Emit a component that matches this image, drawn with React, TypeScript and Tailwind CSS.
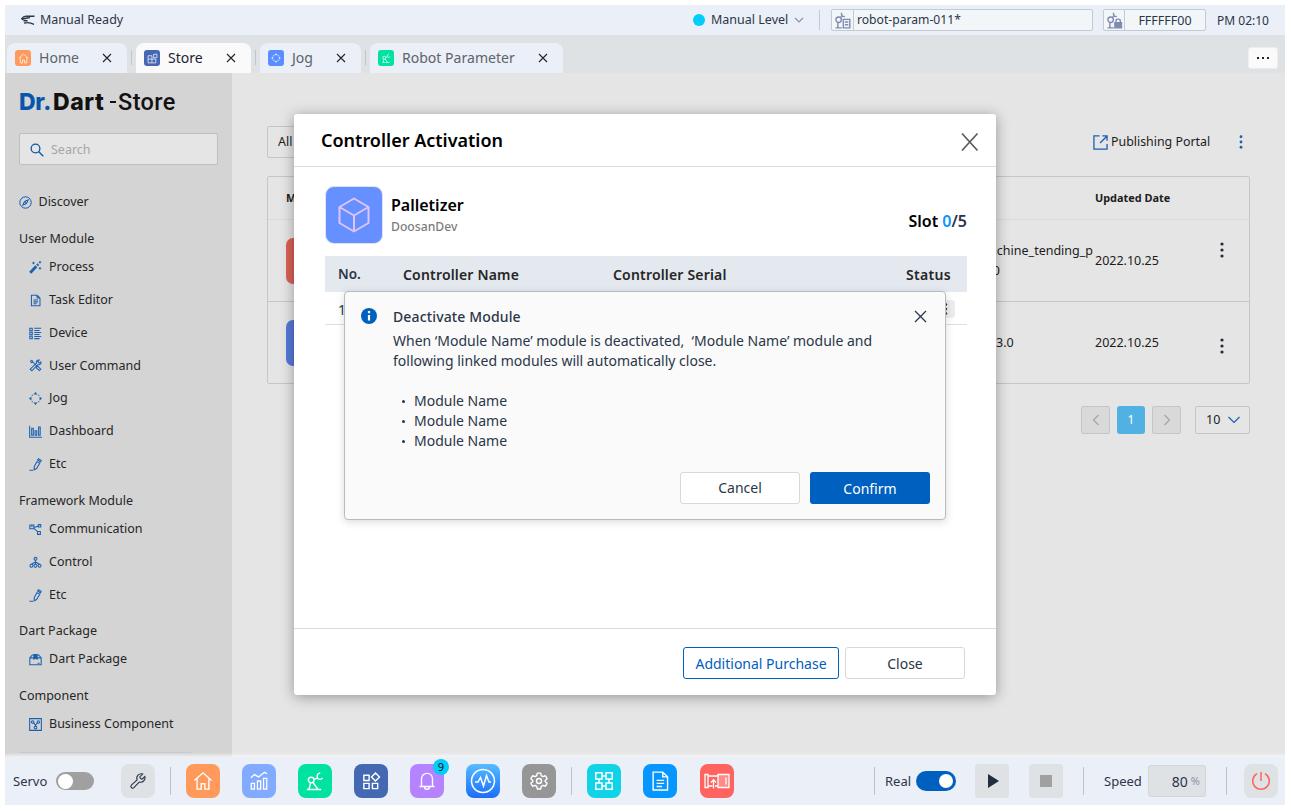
import React from "react";

type IconProps = { size?: number; className?: string; children?: React.ReactNode; box?: number; sw?: number };

function Ic({ size = 14, box = 16, sw = 1.2, className = "", children }: IconProps) {
  return (
    <svg width={size} height={size} viewBox={`0 0 ${box} ${box}`} fill="none" stroke="currentColor" strokeWidth={sw} className={`shrink-0 ${className}`}>
      {children}
    </svg>
  );
}

const robot = (
  <>
    <circle cx="6.500" cy="9.500" r="3" />
    <path d="M9.300 8.700 13 7.500M5.800 12.400 4.300 19M8.300 12 13.500 19M2 19.500h15M16 2c-2.700.5-3.700 2-3 5 1 2.500 3.700 2.200 5.500.3" />
  </>
);
const store = (
  <>
    <path d="M3 4.500h5.500V10H3zM3 13h5.500v5.500H3zM12 13h5.500v5.500H12zM15.200 2.200 19.400 6.400 15.200 10.600 11 6.400z" />
  </>
);
const home = <path d="M1.500 10.500 11 2l9.500 8.500M4.500 8.500V20H9v-6h4v6h4.500V8.500" />;
const doc = (
  <>
    <path d="M3 1.500h7l3.500 3.500v9.500H3zM10 1.500V5h3.500M5.500 7.500h5.500M5.500 9.700h5.500M5.500 12h4" />
  </>
);
const etc = <path d="M.5 15h4.500M6.500 10.500 9.700 4.500l3.600 2-4 6.500-3 1.500zM10.500 2.500l3.700 2.200 1-1.700-3.700-2z" />;
const jog = <path d="M8 .8 6 3h4zM8 15.200 6 13h4zM.8 8 3 6v4zM15.200 8 13 6v4zM3.500 4.500l1-1 .7.7-1 1zM11.500 3.500l1 1-.7.7-1-1zM3.500 11.500l1 1 .7-.7-1-1zM12.500 11.500l-1 1-.7-.7 1-1z" fill="currentColor" />;
const X = ({ size, sw = 1.1, className = "" }: { size: number; sw?: number; className?: string }) => (
  <Ic size={size} box={size} sw={sw} className={className}>
    <path d={`M1 1 ${size - 1} ${size - 1}M${size - 1} 1 1 ${size - 1}`} />
  </Ic>
);

function Dots({ className }: { className: string }) {
  return (
    <svg width="4" height="16" viewBox="0 0 4 16" fill="currentColor" className={`shrink-0 ${className}`}>
      <circle cx="2" cy="2" r="1.600" />
      <circle cx="2" cy="8" r="1.600" />
      <circle cx="2" cy="14" r="1.600" />
    </svg>
  );
}

function TopBar() {
  return (
    <div className="flex h-[30px] items-center bg-[#ebeff7] text-[12.500px] text-[#2b3648]">
      <svg width="14" height="11" viewBox="0 0 14 11" fill="none" stroke="currentColor" strokeWidth="1.400" className="ml-4 shrink-0">
        <path d="M.3 4.200C2 1.500 4 .9 6 1.200h7.500M.8 4.800C3 3 6 3.300 9 2.600M2.500 5.800h4M3 8.200c3-1 6-.9 10 1.200" />
      </svg>
      <span className="ml-[5px] w-[653px] pt-px">Manual Ready</span>
      <span className="size-3 shrink-0 rounded-full bg-[#00cdf9]" />
      <span className="ml-[6px] w-[77px] pt-px whitespace-nowrap">Manual Level</span>
      <Ic size={10} box={10} className="ml-[6px] text-[#8791ad]"><path d="M1 3l4 4 4-4" /></Ic>
      <span className="ml-[15px] h-5 w-px shrink-0 bg-[#c3cad3]" />
      <div className="ml-[11px] flex h-[22px] w-[262px] shrink-0 items-center rounded-[2px] border border-[#c3cad3] bg-[#f2f6f9]">
        <span className="flex h-full w-[22px] items-center justify-center border-r border-[#c3cad3] text-[#7f8bae]">
          <Ic size={17} box={22} sw={1.800}>
            <circle cx="6" cy="10" r="3.500" /><path d="M8 7l3-1.500M10 1c-1 2 0 5 4 5M5 13.500V20M2 20.500h8M12 9.500h8.500v11H12zM14 13h4.500M14 16.500h4.500" />
          </Ic>
        </span>
        <span className="ml-[3px] text-[12.150px]">robot-param-011*</span>
      </div>
      <div className="ml-[10px] flex h-[22px] w-[103px] shrink-0 items-center rounded-[2px] border border-[#c3cad3] bg-[#f2f6f9]">
        <span className="flex h-full w-[21px] items-center justify-center border-r border-[#c3cad3] text-[#7f8bae]">
          <Ic size={17} box={22} sw={1.800}>
            <circle cx="6" cy="10" r="3.500" /><path d="M8 7l3-1.500M10 1c-1 2 0 5 4 5M5 13.500V20M2 20.500h8" /><path d="M13 14v-2.500c0-3 5.500-3 5.500 0V14" /><path d="M11.500 14H20v6.500h-8.500z" fill="currentColor" />
          </Ic>
        </span>
        <span className="flex-1 pt-px text-center text-[12.500px] leading-5">FFFFFF00</span>
      </div>
      <span className="ml-[11px] pt-px text-[12px] whitespace-nowrap">PM 02:10</span>
    </div>
  );
}

function Tab({ cls, tile, label, icon, active }: { cls: string; tile: string; label: string; icon: React.ReactNode; active?: boolean }) {
  return (
    <div className={`flex h-[30px] shrink-0 items-center rounded-t-[8px] pl-2 ${active ? "bg-[#fafafa] text-[#1c2433]" : "bg-[#ebeff7] text-[#5e636b]"} ${cls}`}>
      <span className={`flex size-4 shrink-0 items-center justify-center rounded-[3px] text-white/80 ${tile}`}>{icon}</span>
      <span className="ml-2 flex-1 text-[14.050px] whitespace-nowrap">{label}</span>
      <X size={10} className="mr-[15px] text-[#222]" />
    </div>
  );
}

function Tabs() {
  return (
    <div className="flex h-[38px] items-end bg-[#dee2e4] pl-[2px]">
      <Tab cls="w-[120px]" tile="bg-[#ff9a5c]" label="Home" icon={<Ic size={11} box={22} sw={1.800}>{home}</Ic>} />
      <span className="mb-2 ml-1 h-[15px] w-px bg-[#c2c5c9]" />
      <Tab cls="ml-1 w-[115px]" tile="bg-[#4568b3]" label="Store" active icon={<Ic size={11} box={20} sw={1.600}><path d="M2 5h7v6h7v7H2zM2 11h7v7M12 2.500l6-.5v6.500h-6z" /></Ic>} />
      <span className="mb-2 ml-1 h-[15px] w-px bg-[#c2c5c9]" />
      <Tab cls="ml-1 w-[101px]" tile="bg-[#5a8dff]" label="Jog" icon={<Ic size={10} sw={0.600}>{jog}</Ic>} />
      <span className="mb-2 ml-1 h-[15px] w-px bg-[#c2c5c9]" />
      <Tab cls="ml-1 w-[193px]" tile="bg-[#00e3a0]" label="Robot Parameter" icon={<Ic size={10} box={20} sw={1.800}>{robot}</Ic>} />
      <div className="mr-[7px] mb-1 ml-auto flex h-[22px] w-[30px] items-center justify-center gap-[3px] rounded-[3px] border border-[#eceeef] bg-[#fafafa]">
        <i className="size-[2px] bg-[#222]" /><i className="size-[2px] bg-[#222]" /><i className="size-[2px] bg-[#222]" />
      </div>
    </div>
  );
}

type NavItem = { label: string; icon: React.ReactNode };
const groups: { title: string; items: NavItem[] }[] = [
  {
    title: "User Module",
    items: [
      { label: "Process", icon: <><path d="M1.500 14.500 9 6.500" strokeWidth="3.400" /><path d="M10 5.500l1.500-1.600" strokeWidth="3" /><path d="M5.500 1v3M4 2.500h3M13.500 0v3M12 1.500h3M13.500 7.500v3M12 9h3" strokeWidth="1.200" /></> },
      { label: "Task Editor", icon: doc },
      { label: "Device", icon: <path d="M1 1.500h3v3H1zM1 6.500h3v3H1zM1 11.500h3v3H1zM6.500 1.500H15M6.500 4.300H13M6.500 6.700H15M6.500 9.300H13M6.500 11.700H15M6.500 14.300H13" /> },
      { label: "User Command", icon: <><path d="M2 1.500l2 .5 1 2 4 4M9.500 9.500l1.500-.5 3.500 3.500-1.800 1.800L9.300 11zM14.500 3.500l-2 1.500-1.700-1.700L12.500 1.300C10 .8 8.500 3 9.200 5L1.500 12.500l2 2L11 7c2.500.7 4.500-1 3.500-3.500zM1.500 2.500l1.800 2 1.500-.3" /></> },
      { label: "Jog", icon: <><path d="M8 0 5.500 3h5zM8 16l-2.500-3h5zM0 8l3-2.500v5zM16 8l-3-2.500v5z" fill="currentColor" stroke="none" /><path d="M3.500 4.500l1-1M11.500 3.500l1 1M3.500 11.500l1 1M12.500 11.500l-1 1" /></> },
      { label: "Dashboard", icon: <path d="M.8 1v14H16M3.300 4h2v8.500h-2zM7.500 7h2v5.500h-2zM11.800 2.500h2v10h-2z" /> },
      { label: "Etc", icon: etc },
    ],
  },
  {
    title: "Framework Module",
    items: [
      { label: "Communication", icon: <path d="M1 2.500h5v4.500H1zM2.500 4h2M6 5.500l5-1.500M6 6.500l4.500 4M11.500 2h3v3h-3zM10.500 10.500h3.500v3.500h-3.500z" /> },
      { label: "Control", icon: <><circle cx="8" cy="3.500" r="1.800" /><circle cx="3" cy="12" r="1.800" /><circle cx="8" cy="12" r="1.800" /><circle cx="13" cy="12" r="1.800" /><path d="M8 5.300v5M3 10.200 8 7.300l5 2.900" /></> },
      { label: "Etc", icon: etc },
    ],
  },
  { title: "Dart Package", items: [{ label: "Dart Package", icon: <><path d="M1 6l3-3.500h8L15 6v8.500H1zM1 6h14M10.500 12.500h2.500" /><path d="M6 2h4v5.500L8 6.500 6 7.500z" fill="currentColor" /></> }] },
  { title: "Component", items: [{ label: "Business Component", icon: <><path d="M.8.800h14.400v14.400H.8z" /><circle cx="4.500" cy="5" r="1.500" /><circle cx="11.500" cy="5" r="1.500" /><circle cx="8" cy="11.700" r="1.700" /><path d="M5.500 6 8 8.500 10.500 6M8 8.500V10" /></> }] },
];

function Sidebar() {
  return (
    <aside className="flex w-[227px] shrink-0 flex-col bg-[#d4d4d4] pl-[14px] text-[12.500px] text-[#262626]">
      <div className="mt-[15px] flex h-7 items-center font-['Inter'] text-[23px] leading-7 whitespace-nowrap">
        <span className="w-[34px] font-extrabold tracking-[-0.300px] text-[#0656ae]">Dr.</span>
        <span className="w-[55px] font-extrabold tracking-[0.600px] text-[#111]">Dart</span>
        <span className="flex w-[10px] pl-[2px]"><i className="h-[2px] w-[6px] bg-[#111]" /></span>
        <span className="font-['Roboto'] text-[23.500px] font-medium tracking-[0.400px] text-[#111]">Store</span>
      </div>
      <div className="mt-[17px] flex h-[32px] w-[199px] shrink-0 items-center rounded-[2px] border border-[#bcbfc2] bg-[#e5e5e5] pt-px pl-[10px]">
        <Ic size={14} sw={1.500} className="text-[#0656ae]"><circle cx="6.300" cy="6.300" r="5" /><path d="M10 10l5.200 5.200" /></Ic>
        <span className="ml-[7px] pt-px text-[#a5a5a5]">Search</span>
      </div>
      <div className="mt-[21px] flex h-[33px] shrink-0 items-center">
        <Ic size={13} className="text-[#0656ae]"><circle cx="8" cy="8" r="7" /><path d="M11.500 4.500 9.300 9.300 4.500 11.500 6.700 6.700z" /><circle cx="8" cy="8" r="1" /></Ic>
        <span className="ml-[6.500px]">Discover</span>
      </div>
      {groups.map((g) => (
        <div key={g.title} className="mt-2 shrink-0">
          <div className="flex h-6 items-center">{g.title}</div>
          {g.items.map((it, i) => (
            <div key={i} className="flex h-[32.850px] items-center pl-[10px]">
              <Ic size={13} sw={1.300} className="text-[#1c60b0]">{it.icon}</Ic>
              <span className="ml-[7px]">{it.label}</span>
            </div>
          ))}
        </div>
      ))}
      <div className="mt-[11px] h-px w-[172px] shrink-0 bg-[#c3c8cf]" />
    </aside>
  );
}

function Content() {
  return (
    <main className="flex min-w-0 flex-1 flex-col bg-[#e5e5e5] pr-[35px] pl-[35px] text-[12.500px] text-[#1c1c1c]">
      <div className="mt-[53px] flex h-8 items-center">
        <div className="flex h-8 w-[120px] items-center rounded-[2px] border border-[#c3c6c9] pt-px pl-[10px]">All</div>
        <Ic size={15} sw={1.400} className="ml-auto text-[#1c5fb5]"><path d="M7 1H1v14h14V9.500M10 1h5v5M15 1 7.500 8.500" /></Ic>
        <span className="ml-[3px] w-[128px] pt-px text-[12.400px]">Publishing Portal</span>
        <Dots className="mr-[7px] h-[14px] text-[#1c5fb5]" />
      </div>
      <div className="mt-[18px] flex h-[208px] flex-col rounded-[2px] border border-[#c3c7ca]">
        <div className="flex h-[43px] shrink-0 items-center border-b border-[#d9dadb] text-[10.900px] font-bold">
          <span className="w-[827px] pl-[18px]">Module</span>
          <span>Updated Date</span>
        </div>
        <div className="flex h-[82px] shrink-0 items-center border-b border-[#c3c7ca]">
          <span className="ml-[18px] h-[46px] w-[46px] rounded-[7px] bg-[#db6157]" />
          <span className="ml-[643px] w-[118px] text-right leading-5"><span className="block whitespace-nowrap">machine_tending_p</span><span className="block pr-[93px]">0</span></span>
          <span className="ml-[2px] w-[125px] pt-[2px]">2022.10.25</span>
          <Dots className="mb-[22px] text-[#222b3a]" />
        </div>
        <div className="flex flex-1 items-center">
          <span className="ml-[18px] h-[46px] w-[46px] rounded-[7px] bg-[#5579d8]" />
          <span className="ml-[654px] w-[109px] pt-px pl-[10px]">3.0</span>
          <span className="w-[125px] pt-px">2022.10.25</span>
          <Dots className="mt-[6px] text-[#222b3a]" />
        </div>
      </div>
      <div className="mt-[22px] flex h-[28px] justify-end">
        <div className="flex w-[29px] items-center justify-center rounded-[2px] border border-[#c3c6c9] bg-[#d9d9d9] text-[#a5a5a5]"><Ic size={12} box={12}><path d="M8.500 1l-5 5 5 5" /></Ic></div>
        <div className="ml-[7px] flex w-[28px] items-center justify-center rounded-[3px] bg-[#50b1e2] text-[12px] text-white">1</div>
        <div className="ml-[7px] flex w-[29px] items-center justify-center rounded-[2px] border border-[#c3c6c9] bg-[#d9d9d9] text-[#a5a5a5]"><Ic size={12} box={12}><path d="M3.500 1l5 5-5 5" /></Ic></div>
        <div className="ml-[14px] flex w-[55px] items-center rounded-[2px] border border-[#c3c6c9] pl-[10px]">
          <span>10</span><Ic size={12} box={12} className="ml-2 text-[#1c5fb5]"><path d="M.5 3 6 8.500 11.500 3" /></Ic>
        </div>
      </div>
    </main>
  );
}

function Tile({ cls, children }: { cls: string; children: React.ReactNode }) {
  return <div className={`relative flex size-[34px] shrink-0 items-center justify-center rounded-[8px] text-white ${cls}`}>{children}</div>;
}
const Sep = ({ cls }: { cls: string }) => <span className={`h-[28px] w-px shrink-0 bg-[#bfc3c8] ${cls}`} />;

function Dock() {
  return (
    <footer className="relative flex h-[48px] shrink-0 items-center bg-[#ebeff7] pl-2 text-[13px] text-[#2b3648] shadow-[0_-2px_3px_rgba(255,255,255,0.700)]">
      <span className="w-[42px] pt-px">Servo</span>
      <span className="ml-px flex h-[18px] w-[38px] shrink-0 items-center rounded-full bg-[#a0a0a0] pl-[1.500px]"><i className="size-[15px] rounded-full bg-white" /></span>
      <Tile cls="ml-[27px] bg-[#dee2e4] text-[#2b3648]!">
        <Ic size={18} box={24} sw={1.500}><path d="M14.700 6.300a1 1 0 0 0 0 1.400l1.600 1.600a1 1 0 0 0 1.400 0l3.500-3.300a6 6 0 0 1-7.600 7.400L6.500 20.900a2.100 2.100 0 0 1-3.300-3.300l7.600-7a6 6 0 0 1 7.500-7.900z" /></Ic>
      </Tile>
      <Sep cls="ml-[15px]" />
      <Tile cls="ml-[15px] bg-[#ff9a5c]"><Ic size={20} box={22} sw={1.500}>{home}</Ic></Tile>
      <Tile cls="ml-[22px] bg-[#82abff]"><Ic size={20} box={22} sw={1.400}><path d="M2 7.500 6 4l4.500 2.500L17 1.500l3 1.500M2.500 13.500h3.500v6.500H2.500zM9.300 11h3.500v9H9.300zM16 8h3.500v12H16z" /></Ic></Tile>
      <Tile cls="ml-[22px] bg-[#00e3a0]"><Ic size={20} box={21} sw={1.500}>{robot}</Ic></Tile>
      <Tile cls="ml-[22px] bg-[#4568b3]"><Ic size={20} box={21} sw={1.500}>{store}</Ic></Tile>
      <Tile cls="ml-[22px] bg-[#b583ff]">
        <Ic size={20} box={20} sw={1.400}><path d="M2.500 15.500h15M4.500 15.500V8c0-7.500 11-7.500 11 0v7.500M7.500 16c0 3 5 3 5 0" /></Ic>
        <span className="absolute -top-[5px] -right-[5px] flex size-[16px] items-center justify-center rounded-full bg-[#00cdf9] text-[11px] text-[#111]">9</span>
      </Tile>
      <Tile cls="ml-[22px] bg-linear-to-b from-[#57bcff] to-[#1f6bfa]"><Ic size={26} box={26} sw={1.500}><circle cx="13" cy="13" r="11.500" /><path d="M5 14h3l2.500-4.500 3 8.500 3-10.500 2.500 6.500H21" /></Ic></Tile>
      <Tile cls="ml-[22px] bg-[#969696]"><Ic size={20} box={24} sw={1.700}><path d="M10 2.500h4l.7 3 2 1.200 3-1 2 3.500-2.300 2.100v1.400l2.300 2.100-2 3.500-3-1-2 1.200-.7 3h-4l-.7-3-2-1.200-3 1-2-3.500 2.300-2.100v-1.400L2.300 9.200l2-3.500 3 1 2-1.200z" strokeLinejoin="round" /><circle cx="12" cy="12" r="3" /></Ic></Tile>
      <Sep cls="ml-[15px]" />
      <Tile cls="ml-[15px] bg-[#10d3e8]"><Ic size={20} box={20} sw={1.500}><path d="M1.800 1.800H8V8H1.800zM12 1.800h6.200V8H12zM1.800 12H8v6.200H1.800zM12 12h6.200v6.200H12zM8 5h4M8 15h4M5 8v4M15 8v4" /></Ic></Tile>
      <Tile cls="ml-[22px] bg-[#0696ff]"><Ic size={22} box={16} sw={1}>{doc}</Ic></Tile>
      <Tile cls="ml-[23px] bg-[#ff635f]"><Ic size={26} box={26} sw={1.300}><path d="M1 6.500h3v13H1zM4 8h10M4 18h4.500" /><path d="M14 6.500h11v13H14zM14 18h-3M22 9.500v7" fill="rgba(255,255,255,0.250)" /><path d="M9.500 20.500V12M7 14.500l2.500-2.700 2.500 2.700" /></Ic></Tile>
      <Sep cls="ml-[140px]" />
      <span className="ml-[10px] w-[31px] pt-px">Real</span>
      <span className="flex h-5 w-10 shrink-0 items-center justify-end rounded-full bg-[#0060c0] pr-[3px]"><i className="size-[14px] rounded-full bg-white" /></span>
      <Tile cls="ml-[19px] bg-[#dee2e4] rounded-[4px]! text-[#222d3f]!"><svg width="11" height="14" viewBox="0 0 11 14" fill="currentColor" className="ml-[2px]"><path d="M0 0l11 7-11 7z" /></svg></Tile>
      <Tile cls="ml-[20px] bg-[#dee2e4] rounded-[4px]!"><i className="size-3 bg-[#a0a0a0]" /></Tile>
      <Sep cls="ml-[20px]" />
      <span className="ml-[20px] w-[44px] pt-px">Speed</span>
      <div className="flex h-8 w-[58px] shrink-0 items-center justify-end rounded-[3px] border border-[#d2d6d9] bg-[#dee2e4] pr-[5px] text-[14px]">80<span className="ml-[3px] text-[11px] text-[#8d94a3]">%</span></div>
      <Sep cls="ml-[20px]" />
      <Tile cls="ml-[17px] bg-[#dee2e4] text-[#ff635f]!"><Ic size={20} box={20} sw={1.500}><path d="M10 1v9M6 2.700a8.300 8.300 0 1 0 8 0" /></Ic></Tile>
    </footer>
  );
}

function AlertBox() {
  return (
    <div className="absolute top-[177px] left-[50px] flex h-[229px] w-[602px] flex-col rounded-[4px] border border-[#b7bcc1] bg-[#fafafa] shadow-[0_2px_8px_rgba(0,0,0,0.150)]">
      <div className="mt-[14px] flex h-5 items-center pr-[18px] pl-4 text-[14px]">
        <svg width="16" height="16" viewBox="0 0 16 16" className="shrink-0">
          <circle cx="8" cy="8" r="8" fill="#0060c0" />
          <path d="M8 7v5.500M8 3v2.200" stroke="#fff" strokeWidth="2.200" />
        </svg>
        <span className="ml-4 flex-1 pt-px font-medium tracking-[0.140px] text-[#2b3648]">Deactivate Module</span>
        <X size={13} sw={1.300} className="text-[#2b3648]" />
      </div>
      <div className="mt-[5px] pl-12 text-[14px] leading-5 text-[#2b3648]">
        <p className="whitespace-pre">When ‘Module Name’ module is deactivated,  ‘Module Name’ module and</p>
        <p>following linked modules will automatically close.</p>
        <ul className="mt-5 pl-[9px]">
          {[0, 1, 2].map((i) => (
            <li key={i} className="flex items-center"><i className="mr-[9px] size-[3px] rounded-full bg-[#2b3648]" />Module Name</li>
          ))}
        </ul>
      </div>
      <div className="mt-[21px] flex justify-end gap-[10px] pr-[15px] text-[14px]">
        <button className="h-8 w-[120px] rounded-[3px] border border-[#d5d9dd] bg-white pb-[2px] text-[#2b3648]">Cancel</button>
        <button className="h-8 w-[120px] rounded-[3px] bg-[#0060c0] text-white">Confirm</button>
      </div>
    </div>
  );
}

function Modal() {
  return (
    <section className="absolute top-[109px] left-[289px] flex h-[581px] w-[702px] flex-col rounded-[3px] bg-white shadow-[0_2px_14px_rgba(0,0,0,0.350)]">
      <header className="flex h-[53px] shrink-0 items-center border-b border-[#d5dce2] pr-[17px] pl-[27px]">
        <h1 className="flex-1 text-[18px] font-semibold text-black">Controller Activation</h1>
        <svg width="18" height="20" viewBox="0 0 18 20" stroke="#5a5a5a" strokeWidth="1.700" className="mt-[3px]"><path d="M1 1.500l15.500 17M16.500 1.500 1 18.500" /></svg>
      </header>
      <div className="flex h-[89px] shrink-0 items-center pr-[29px] pl-[31px]">
        <span className="mt-[7px] flex size-[58px] items-center justify-center rounded-[9px] border border-[#dfe4ee] bg-[#6690ff]">
          <svg width="32" height="36" viewBox="0 0 32 36" fill="none" stroke="#e0c3fb" strokeWidth="2" strokeLinejoin="round"><path d="M16 1.500 30.500 10v16L16 34.500 1.500 26V10zM1.500 10 16 18.500 30.500 10M16 18.500v16" /></svg>
        </span>
        <div className="mt-[6px] ml-2 flex-1">
          <div className="text-[16px] leading-6 font-semibold text-black">Palletizer</div>
          <div className="text-[12.200px] leading-[19px] font-medium text-[#7d7d7d]">DoosanDev</div>
        </div>
        <div className="mt-[19px] text-[16px] font-semibold text-black">Slot <span className="text-[#0696ff]">0</span><span className="text-[#2b3648]">/5</span></div>
      </div>
      <div className="mr-[29px] ml-[31px] flex h-9 shrink-0 items-center bg-[#e4e8ef] pr-4 pl-[13px] text-[14px] font-semibold text-[#262626]">
        <span className="w-[65px] text-[13.500px] text-[#2b3648]">No.</span>
        <span className="w-[210px] tracking-[0.180px]">Controller Name</span>
        <span className="flex-1 tracking-[0.180px]">Controller Serial</span>
        <span className="tracking-[0.300px]">Status</span>
      </div>
      <div className="mr-[29px] ml-[31px] flex h-[33px] shrink-0 items-center justify-between border-b border-[#dcdfe3] pt-px pr-3 pl-[13px] text-[14px] text-[#2b3648]">
        <span className="pt-px">1</span>
        <span className="flex h-[18px] w-[18px] items-center justify-center rounded-[3px] bg-[#ececec]"><Dots className="h-3" /></span>
      </div>
      <footer className="mt-auto flex h-[67px] shrink-0 items-center justify-end gap-[6px] border-t border-[#d5dce2] pt-[2px] pr-[31px] text-[14px]">
        <button className="h-8 w-[156px] rounded-[3px] border border-[#0060c0] bg-white text-[#0060c0]">Additional Purchase</button>
        <button className="h-8 w-[120px] rounded-[3px] border border-[#d5d9dd] bg-white text-[#2b3648]">Close</button>
      </footer>
      <AlertBox />
    </section>
  );
}

export default function App() {
  return (
    <div className="h-[811px] w-[1291px] overflow-hidden bg-white p-[5px] font-['Noto_Sans',sans-serif]">
      <div className="relative flex h-[800px] w-[1280px] flex-col overflow-hidden">
        <TopBar />
        <Tabs />
        <div className="flex h-[684px] overflow-hidden">
          <Sidebar />
          <Content />
        </div>
        <Dock />
        <Modal />
      </div>
    </div>
  );
}
